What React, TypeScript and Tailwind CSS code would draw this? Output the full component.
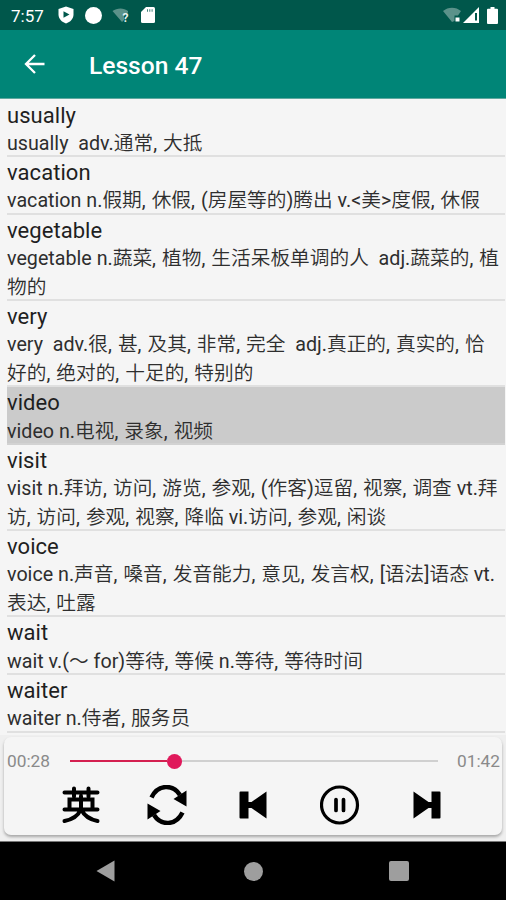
import { Fragment } from "react";
import { clsx } from "clsx";

interface Word {
  word: string;
  // one entry per wrapped line
  lines: string[];
}

const WORDS: Word[] = [
  { word: "usually", lines: ["usually  adv.通常, 大抵"] },
  { word: "vacation", lines: ["vacation n.假期, 休假, (房屋等的)腾出 v.<美>度假, 休假"] },
  { word: "vegetable", lines: ["vegetable n.蔬菜, 植物, 生活呆板单调的人  adj.蔬菜的, 植", "物的"] },
  { word: "very", lines: ["very  adv.很, 甚, 及其, 非常, 完全  adj.真正的, 真实的, 恰", "好的, 绝对的, 十足的, 特别的"] },
  { word: "video", lines: ["video n.电视, 录象, 视频"] },
  { word: "visit", lines: ["visit n.拜访, 访问, 游览, 参观, (作客)逗留, 视察, 调查 vt.拜", "访, 访问, 参观, 视察, 降临 vi.访问, 参观, 闲谈"] },
  { word: "voice", lines: ["voice n.声音, 嗓音, 发音能力, 意见, 发言权, [语法]语态 vt.", "表达, 吐露"] },
  { word: "wait", lines: ["wait v.(～ for)等待, 等候 n.等待, 等待时间"] },
  { word: "waiter", lines: ["waiter n.侍者, 服务员"] },
];

const CURRENT = "video";

function StatusBar() {
  return (
    <div className="flex h-[30px] shrink-0 items-center bg-[#00574b] pl-[11px] pr-2 text-white">
      <span className="w-[47px] pt-px text-[17px] leading-[30px]">7:57</span>
      <svg className="h-[18px] w-4" viewBox="0 0 16 18" fill="currentColor">
        <path d="M8 0.500 15.500 3v5.500c0 4.300-3.200 7.500-7.500 9-4.300-1.500-7.500-4.700-7.500-9V3z" />
        <path d="M5.500 5.300v6.400l6-3.200z" fill="#00574b" />
      </svg>
      <span className="ml-[11px] size-[17px] rounded-full bg-white" />
      <svg className="ml-[10px] h-4 w-[18px]" viewBox="0 0 18 16">
        <path d="M0.500 4C5 0.500 12 0.500 16 4v1.500l-4 2V13l-2 2z" fill="#5b928a" />
        <text x="10.500" y="14.500" fontSize="12" fontWeight="700" fill="#e8f2f0">?</text>
      </svg>
      <svg className="ml-[11px] h-4 w-[14px]" viewBox="0 0 14 16" fill="currentColor">
        <path d="M5 0h7.500Q14 0 14 1.500v13Q14 16 12.500 16h-11Q0 16 0 14.500V5z" />
        <path d="M6 2.300h1v2.400H6zM8.300 2.300h1v2.400h-1zM10.600 2.300h1v2.400h-1z" fill="#41827a" />
      </svg>
      <svg className="ml-auto h-4 w-[18px]" viewBox="0 0 18 16">
        <path d="M0 4C5-0.500 13-0.500 18 4l-3 4.500h-3.500V14L9 15z" fill="#5b928a" />
        <path d="M12.500 10.500h4v4h-4z" fill="#fff" />
      </svg>
      <svg className="ml-0.5 h-4 w-4" viewBox="0 0 16 16">
        <path d="M16 0v16H0z" fill="#fff" />
        <path d="M12 6h2v7.500h-2z" fill="#00574b" />
      </svg>
      <svg className="ml-2 h-[17px] w-[11px]" viewBox="0 0 11 17" fill="#fff">
        <path d="M3.500 0h4v1.800H10q1 0 1 1V16q0 1-1 1H1q-1 0-1-1V2.800q0-1 1-1h2.500z" />
      </svg>
    </div>
  );
}

function Definition({ text }: { text: string }) {
  return (
    <p className="h-[28.500px] whitespace-pre text-[19.700px] leading-[34.500px] text-[#2e2e2e]">
      {text.split(",").map((part, i) => (
        <Fragment key={i}>
          {i > 0 && <span className="tracking-[1.150px]">,</span>}
          {part}
        </Fragment>
      ))}
    </p>
  );
}

function WordRow({ item, active }: { item: Word; active: boolean }) {
  return (
    <li className={clsx("ml-[7px] mr-[1px] border-b-2 text-[#1f1f1f]", active ? "border-[#d2d2d2] bg-[#cbcbcb]" : "border-[#e0e0e0]")}>
      <p className="h-[27.200px] text-[22px] leading-[32.500px] tracking-[0.05px]">{item.word}</p>
      {item.lines.map((line) => (
        <Definition key={line} text={line} />
      ))}
    </li>
  );
}

function Player() {
  return (
    <div className="flex h-[106px] shrink-0 flex-col bg-[#efefef] px-1 pt-[2px] pb-[6px]">
      <div className="flex-1 rounded-[7px] bg-[#f5f5f5] shadow-[0_2px_3px_rgba(0,0,0,0.3)]">
        <div className="flex h-12 items-center pl-[3px] pr-[2px] text-[17.300px] text-[#8a8a8a]">
          <span className="w-[63px] pt-0.5">00:28</span>
          <div className="flex h-4 w-[368px] items-center">
            <span className="h-0.5 w-[97px] bg-[#d42050]" />
            <span className="size-[15px] rounded-full bg-[#e0195b]" />
            <span className="h-0.5 flex-1 bg-[#d0d0d0]" />
          </div>
          <span className="ml-auto pt-0.5">01:42</span>
        </div>
        <div className="flex h-[40px] items-center pl-[57px] text-black">
          <svg className="h-[38px] w-10" viewBox="0 0 40 38" fill="none" stroke="#000" strokeWidth="4" strokeLinecap="round">
            <path d="M3.500 6.500h33M13 2.500v8M27.500 2.500v8M8.500 23V13.500h23V23M20 10v12.500M3.500 23.500h33M19.500 24C17 30 11 33.500 3.500 35M20.500 24c3 6 8.500 9.500 16 11" />
          </svg>
          <svg className="ml-[46px] h-10 w-10" viewBox="0 0 40 40">
            <path d="M4.500 12.500C11-1 26-1 33 10M35.500 27.500C29 41 14 41 7 30" fill="none" stroke="#000" strokeWidth="4.500" />
            <path d="M39.500 5.500v16L26.500 14zM0.500 18.500 13.500 26l-13 8.500z" />
          </svg>
          <svg className="ml-[52px] h-7 w-[28px]" viewBox="0 0 28 28">
            <path d="M1.500 0.500h8v10.500h3L27.500 0.500v27L12.500 17h-3v10.500h-8q-1 0-1-1v-25q0-1 1-1z" />
          </svg>
          <svg className="ml-[53px] h-10 w-10" viewBox="0 0 40 40" fill="none" stroke="#000">
            <circle cx="19.500" cy="20" r="18" strokeWidth="3.200" />
            <path d="M16 14.500v11M23.500 14.500v11" strokeWidth="3.700" strokeLinecap="round" />
          </svg>
          <svg className="ml-[53px] h-7 w-[28px]" viewBox="0 0 28 28">
            <path d="M26.500 0.500h-8v10.500h-3L0.500 0.500v27L15.500 17h3v10.500h8q1 0 1-1v-25q0-1-1-1z" />
          </svg>
        </div>
      </div>
    </div>
  );
}

export default function App() {
  return (
    <div className="flex h-[900px] w-[506px] flex-col overflow-hidden bg-[#f5f5f5] font-['Roboto','Noto_Sans_CJK_SC_DemiLight','Noto_Sans_CJK_SC_Light','Noto_Sans_CJK_SC',sans-serif]">
      <StatusBar />
      <header className="flex h-[69px] shrink-0 items-center border-b border-[#5fa89f] bg-[#008577] pl-6 text-white">
        <svg className="size-[22px]" viewBox="0 0 22 22" fill="none" stroke="currentColor" strokeWidth="2.300">
          <path d="M20.500 11H3M11 2 2 11l9 9" />
        </svg>
        <h1 className="ml-[43px] pt-1 text-[24.600px] font-medium">Lesson 47</h1>
      </header>
      <ul className="min-h-0 flex-1 overflow-hidden pt-[0.600px]">
        {WORDS.map((w) => (
          <WordRow key={w.word} item={w} active={w.word === CURRENT} />
        ))}
      </ul>
      <Player />
      <nav className="flex h-[59px] shrink-0 items-center border-t border-[#777] bg-black">
        <svg className="ml-[96px] h-[22px] w-[19px]" viewBox="0 0 19 22" fill="#9e9e9e">
          <path d="M18.500 0.500v21L0.500 11z" />
        </svg>
        <span className="ml-[129px] size-[19px] rounded-full bg-[#9e9e9e]" />
        <span className="ml-[126px] size-5 rounded-[2px] bg-[#9e9e9e]" />
      </nav>
    </div>
  );
}
